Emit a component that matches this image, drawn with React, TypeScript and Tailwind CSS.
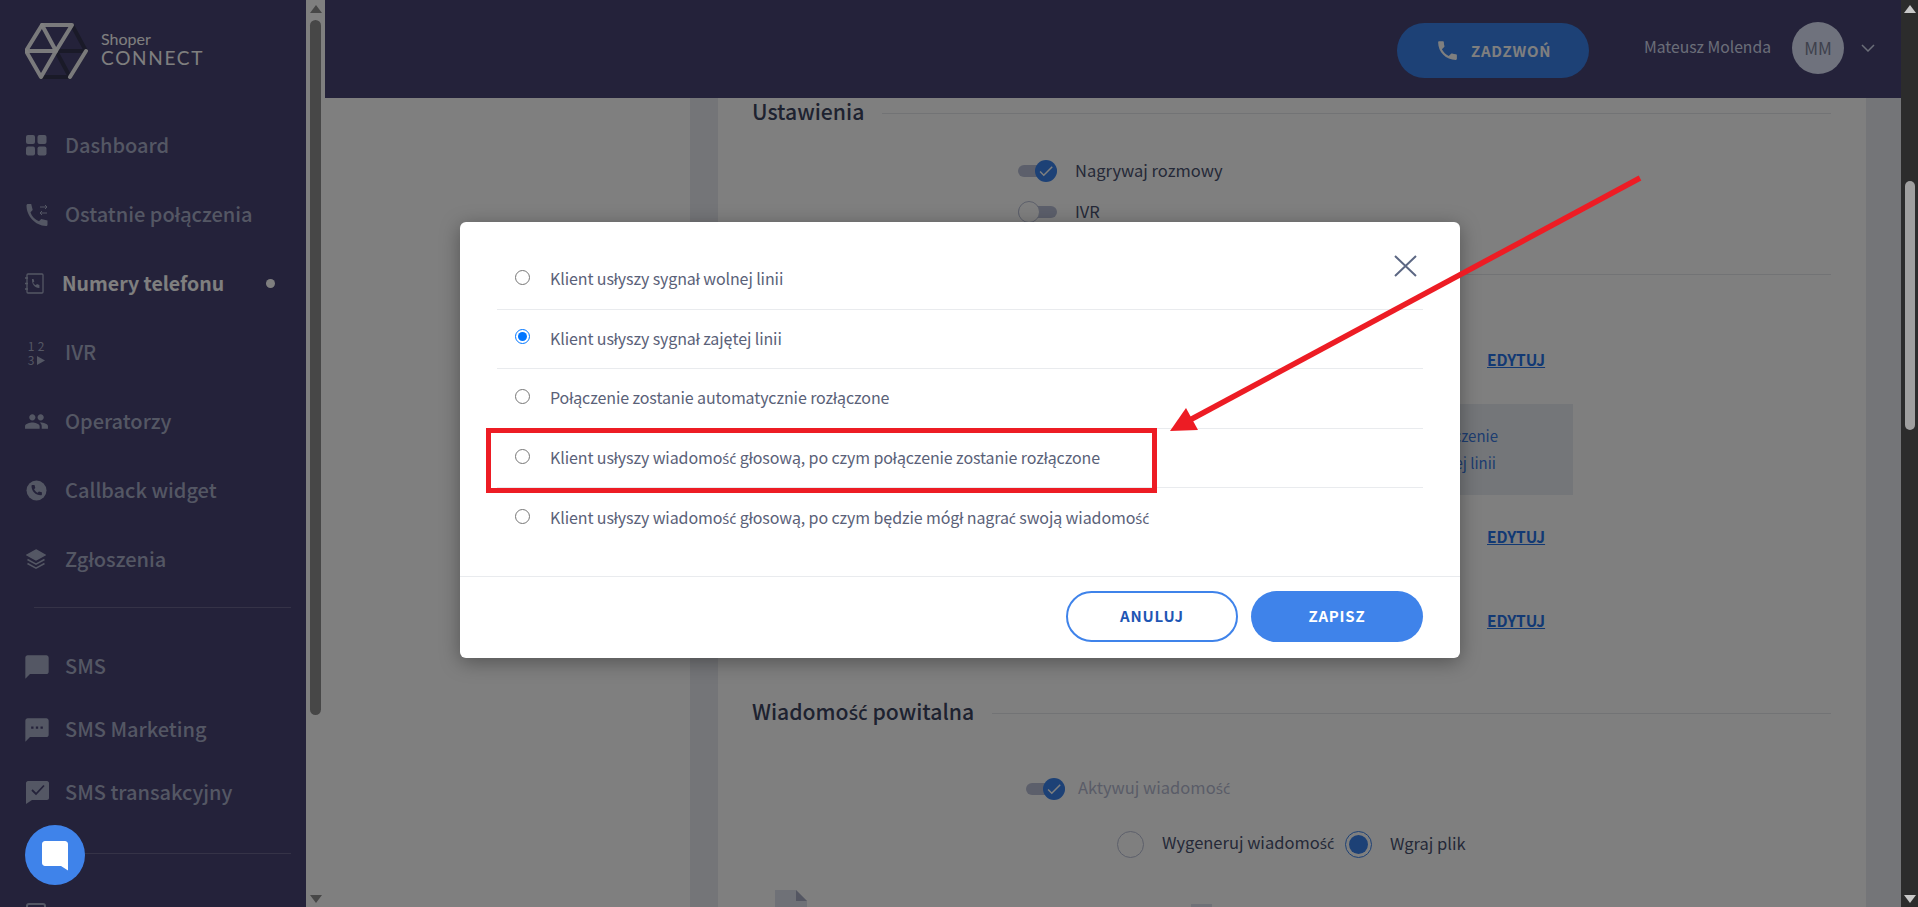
import { ReactNode } from 'react';
import { MdPeople, MdChatBubble, MdSms, MdPhone, MdCheck } from 'react-icons/md';

// the CJK family has no precomposed ś / ć, those two letters come from Noto Sans
function Pl({ text }: { text: string }) {
  return (
    <>
      {text.split(/([ść])/).map((part, i) =>
        part === 'ś' || part === 'ć' ? (
          <span key={i} className="font-['Noto_Sans',sans-serif] text-[0.92em]">{part}</span>
        ) : (
          part
        )
      )}
    </>
  );
}

function DashIcon() {
  return (
    <svg width="21" height="21" viewBox="0 0 21 21" fill="currentColor">
      <rect x="0" y="0" width="9" height="9" rx="2" />
      <rect x="11.5" y="0" width="9" height="9" rx="2" />
      <rect x="0" y="11.5" width="9" height="9" rx="2" />
      <rect x="11.5" y="11.5" width="9" height="9" rx="2" />
    </svg>
  );
}

function RecentIcon() {
  return (
    <svg width="23" height="24" viewBox="0 0 23 24" fill="none" stroke="currentColor">
      <path d="M2 1h3.200l1.500 6-2.200 2.200c1.200 4 4.600 7.500 8.500 9l2.200-2.200 6.300 1.500v4c0 1-.6 1.500-1.500 1.500C9 22.500 .5 13 .5 2.500c0-.9.600-1.500 1.500-1.500z" fill="currentColor" stroke="none" />
      <path d="M14 4h7M19 2l2 2-2 2M21 10h-7M16 8l-2 2 2 2" strokeWidth="1" />
    </svg>
  );
}

function BookIcon() {
  return (
    <svg width="20" height="21" viewBox="0 0 20 21" fill="none" stroke="currentColor" strokeWidth="1.300">
      <rect x="3" y="1" width="16" height="19" rx="1" />
      <path d="M1 5h3M1 10.500h3M1 16h3" />
      <path d="M8 6h1.500l.8 2.500-1.200 1c.6 1.400 1.500 2.300 2.800 2.800l1-1.200 2.500.8V15c-4.500.2-7.500-3.500-7.400-8.500z" fill="currentColor" stroke="none" />
    </svg>
  );
}

function IvrIcon() {
  return (
    <div className="grid grid-cols-2 w-[20px] text-[12px] leading-[14px] font-normal text-center">
      <span>1</span>
      <span>2</span>
      <span>3</span>
      <svg width="9" height="11" viewBox="0 0 9 11" fill="currentColor" className="mt-[2px] ml-[1px]"><path d="M0 1l8 4.500L0 10z" /></svg>
    </div>
  );
}

function CallbackIcon() {
  return (
    <svg width="21" height="21" viewBox="0 0 21 21">
      <circle cx="10.500" cy="10.500" r="10" fill="currentColor" />
      <path d="M6.500 5h2l.8 3-1.200 1.200c.6 1.500 2 2.900 3.600 3.500l1.200-1.200 3 .8v2c0 .6-.4 1-1 1C9.500 15.300 5.500 11 5.500 6c0-.6.4-1 1-1z" fill="#484474" />
    </svg>
  );
}

function LayersIcon() {
  return (
    <svg width="20" height="21" viewBox="0 0 20 21" fill="none" stroke="currentColor" strokeWidth="1.500">
      <path d="M10 1l9 5-9 5-9-5z" fill="currentColor" />
      <path d="M1.500 10.500l8.500 4.700 8.500-4.700M1.500 14.500l8.500 4.700 8.500-4.700" />
    </svg>
  );
}

function SmsDoneIcon() {
  return (
    <svg width="23" height="23" viewBox="0 0 23 23">
      <path d="M2 0h19c1 0 2 1 2 2v15c0 1-1 2-2 2H6l-6 4V2c0-1 1-2 2-2z" fill="currentColor" />
      <path d="M6 9l4 4 8-8.500" fill="none" stroke="#484474" strokeWidth="1.800" />
    </svg>
  );
}

function AppIcon() {
  return (
    <svg width="20" height="28" viewBox="0 0 20 28" fill="none" stroke="currentColor" strokeWidth="2">
      <rect x="1" y="1" width="18" height="26" rx="2" />
    </svg>
  );
}

function Logo() {
  return (
    <svg width="64" height="58" viewBox="0 0 64 58" fill="none" strokeWidth="4" strokeLinecap="round" strokeLinejoin="round">
      <g stroke="#343450">
        <path d="M47 3l14 26-16 26H16" />
        <path d="M31 29h30M31 29l14 26" />
      </g>
      <g stroke="#ffffff" strokeOpacity="0.95">
        <path d="M1 29L17 3h30L31 29z" />
        <path d="M17 3l14 26M1 29l15 26 15-26M45 55l16-26" />
      </g>
    </svg>
  );
}

type Item = { label: string; icon: ReactNode; active?: boolean };

const mainItems: Item[] = [
  { label: 'Dashboard', icon: <DashIcon /> },
  { label: 'Ostatnie połączenia', icon: <RecentIcon /> },
  { label: 'Numery telefonu', icon: <BookIcon />, active: true },
  { label: 'IVR', icon: <IvrIcon /> },
  { label: 'Operatorzy', icon: <MdPeople size={25} className="-ml-[2px]" /> },
  { label: 'Callback widget', icon: <CallbackIcon /> },
  { label: 'Zgłoszenia', icon: <LayersIcon /> },
];

const smsItems: Item[] = [
  { label: 'SMS', icon: <MdChatBubble size={28} className="-ml-[3px]" /> },
  { label: 'SMS Marketing', icon: <MdSms size={28} className="-ml-[3px]" /> },
  { label: 'SMS transakcyjny', icon: <SmsDoneIcon /> },
];

const options = [
  'Klient usłyszy sygnał wolnej linii',
  'Klient usłyszy sygnał zajętej linii',
  'Połączenie zostanie automatycznie rozłączone',
  'Klient usłyszy wiadomość głosową, po czym połączenie zostanie rozłączone',
  'Klient usłyszy wiadomość głosową, po czym będzie mógł nagrać swoją wiadomość',
];

function NavRow({ item, rowClass }: { item: Item; rowClass: string }) {
  if (item.active) {
    return (
      <div className={`${rowClass} flex items-center pl-[24px] text-white`}>
        <div className="w-[38px] shrink-0 text-[#a8aec8]">{item.icon}</div>
        <span className="text-[19.500px] font-bold leading-none -mt-[2px]">{item.label}</span>
        <span className="ml-[42px] w-[9px] h-[9px] rounded-full bg-white" />
      </div>
    );
  }
  return (
    <div className={`${rowClass} flex items-center pl-[26px] text-[#a8aec8]`}>
      <div className="w-[39px] shrink-0">{item.icon}</div>
      <span className="text-[20px] font-medium leading-none -mt-[2px]">{item.label}</span>
    </div>
  );
}

function Sidebar() {
  return (
    <aside className="w-[306px] h-full shrink-0 bg-[#484474] overflow-hidden">
      <div className="h-[111px] pt-[22px] pl-[25px] flex items-start">
        <Logo />
        <div className="ml-[12px] mt-[8px] text-white font-['Lato',sans-serif]">
          <div className="text-[16px] leading-[18px]">Shoper</div>
          <div className="text-[19px] leading-[20px] tracking-[1.700px]">CONNECT</div>
        </div>
      </div>
      {mainItems.map((item) => <NavRow key={item.label} item={item} rowClass="h-[69px]" />)}
      <div className="mt-[12.500px] ml-[34px] mr-[15px] h-px bg-[#6a678f]" />
      <div className="mt-[27.500px]">
        {smsItems.map((item) => <NavRow key={item.label} item={item} rowClass="h-[63px]" />)}
      </div>
      <div className="mt-[29px] ml-[34px] mr-[15px] h-px bg-[#6a678f]" />
      <div className="mt-[31px]">
        <NavRow item={{ label: 'Aplikacja mobilna', icon: <AppIcon /> }} rowClass="h-[63px]" />
      </div>
    </aside>
  );
}

function SideScroll() {
  return (
    <div className="w-[19px] h-full shrink-0 bg-white flex flex-col items-center">
      <div className="mt-[5px] w-0 h-0 border-x-[6px] border-x-transparent border-b-[8px] border-b-[#8e8e8e]" />
      <div className="mt-[7px] w-[11px] h-[695px] rounded-full bg-[#8e8e8e]" />
      <div className="mt-auto mb-[4px] w-0 h-0 border-x-[6px] border-x-transparent border-t-[8px] border-t-[#8e8e8e]" />
    </div>
  );
}

function Toggle({ on, className }: { on: boolean; className: string }) {
  return (
    <div className={`relative w-[39px] h-[12px] rounded-full bg-[#b9bfd6] shrink-0 ${className}`}>
      {on ? (
        <div className="absolute right-0 -top-[5px] w-[22px] h-[22px] rounded-full bg-[#3a82ec] flex items-center justify-center text-white">
          <MdCheck size={18} />
        </div>
      ) : (
        <div className="absolute left-0 -top-[5px] w-[22px] h-[22px] rounded-full bg-white border border-[#b9bfd6]" />
      )}
    </div>
  );
}

function SectionTitle({ text }: { text: string }) {
  return (
    <div className="h-[28px] flex items-center gap-[18px]">
      <h2 className="text-[21.200px] font-medium leading-none text-[#3c4560] whitespace-nowrap -mt-[2px]"><Pl text={text} /></h2>
      <div className="flex-1 h-px bg-[#e4e6ea] mt-[3px]" />
    </div>
  );
}

function EditLink({ className }: { className: string }) {
  return (
    <div className={`h-[28px] ml-[735px] flex items-center ${className}`}>
      <a className="text-[15.500px] font-bold underline text-[#2573e8] leading-none">EDYTUJ</a>
    </div>
  );
}

function Card() {
  return (
    <div className="flex-1 min-h-0 flex overflow-hidden bg-white">
      <div className="w-[365px] shrink-0" />
      <div className="flex-1 pl-[28px] pr-[35px] bg-[#e8ebf0] flex">
        <div className="flex-1 bg-white pl-[34px] pr-[35px]">
          <SectionTitle text="Ustawienia" />
          <div className="mt-[31px] h-[28px] flex items-center text-[16.500px] text-[#4a5270]">
            <Toggle on className="ml-[266px]" />
            <span className="ml-[18px] leading-none -mt-[2px]">Nagrywaj rozmowy</span>
          </div>
          <div className="mt-[13px] h-[28px] flex items-center text-[16.500px] text-[#4a5270]">
            <Toggle on={false} className="ml-[266px]" />
            <span className="ml-[18px] leading-none -mt-[2px]">IVR</span>
          </div>
          <div className="mt-[48px] h-px bg-[#e4e6ea]" />
          <EditLink className="mt-[71px]" />
          <div className="mt-[30px] ml-[148px] w-[673px] h-[91px] bg-[#e9edf3] text-[15px] text-[#3a7ae0] flex flex-col items-end pt-[18px] pr-[75px] leading-[27px]">
            <span>Klient usłyszy komunikat, a następnie połączenie</span>
            <span className="mr-[2px]">zostanie zakończone sygnałem zajętej linii</span>
          </div>
          <EditLink className="mt-[28px]" />
          <EditLink className="mt-[56px]" />
          <div className="mt-[63px]">
            <SectionTitle text="Wiadomość powitalna" />
          </div>
          <div className="mt-[49px] h-[28px] flex items-center text-[16.500px] text-[#b4b9d0]">
            <Toggle on className="ml-[274px]" />
            <span className="ml-[13px] leading-none -mt-[2px]"><Pl text="Aktywuj wiadomość" /></span>
          </div>
          <div className="mt-[28px] ml-[365px] h-[26px] flex items-center text-[16.500px] text-[#4a5270]">
            <div className="w-[27px] h-[27px] shrink-0 rounded-full border border-[#b9bfd6]" />
            <span className="ml-[18px] w-[173px] shrink-0 leading-none whitespace-nowrap -mt-[2px]"><Pl text="Wygeneruj wiadomość" /></span>
            <div className="ml-[10px] w-[27px] h-[27px] shrink-0 rounded-full border border-[#3a82ec] p-[3px]">
              <div className="w-full h-full rounded-full bg-[#3a82ec]" />
            </div>
            <span className="ml-[18px] leading-none whitespace-nowrap -mt-[2px]">Wgraj plik</span>
          </div>
          <div className="mt-[33px] ml-[23px] flex items-start">
            <svg width="32" height="40" viewBox="0 0 32 40">
              <path d="M0 0h21l11 11v29H0z" fill="#dfe2ee" />
              <path d="M21 0l11 11H21z" fill="#a8adc4" />
            </svg>
            <span className="ml-[93px] mt-[15px] w-[291px] text-[18px] font-bold text-[#4a5270] leading-none"><Pl text="wiadomosc_powitalna.wav" /></span>
            <div className="mt-[14px] w-[21px] h-[20px] bg-[#dfe2ee]" />
          </div>
        </div>
      </div>
    </div>
  );
}

function Header() {
  return (
    <header className="h-[98px] shrink-0 bg-[#484474] flex items-start justify-end pr-[26px]">
      <button className="mt-[23px] w-[192px] h-[55px] rounded-full bg-[#3a82ec] flex items-center text-white pl-[38px]">
        <MdPhone size={25} />
        <span className="ml-[11px] text-[15px] font-bold tracking-[0.800px] leading-none -mt-[1px]">ZADZWOŃ</span>
      </button>
      <span className="ml-[55px] mt-[37px] text-[15.700px] leading-[20px] text-[#d6dcf0] whitespace-nowrap">Mateusz Molenda</span>
      <div className="ml-[21px] mt-[22px] w-[52px] h-[52px] rounded-full bg-[#dee4fa] flex items-center justify-center text-[17px] text-[#7c8198]">MM</div>
      <svg width="14" height="8" viewBox="0 0 14 8" fill="none" stroke="#d6dcf0" strokeWidth="1.500" className="ml-[17px] mt-[44px]">
        <path d="M1 1l6 6 6-6" />
      </svg>
    </header>
  );
}

function PageScroll() {
  return (
    <div className="w-[17px] h-full shrink-0 bg-[#2c2c2c] flex flex-col items-center">
      <div className="mt-[5px] w-0 h-0 border-x-[6px] border-x-transparent border-b-[8px] border-b-[#c8c8c8]" />
      <div className="mt-[168px] w-[10px] h-[249px] rounded-full bg-[#9f9f9f]" />
      <div className="mt-auto mb-[4px] w-0 h-0 border-x-[6px] border-x-transparent border-t-[8px] border-t-[#c8c8c8]" />
    </div>
  );
}

function Modal() {
  return (
    <div className="absolute left-[460px] top-[222px] w-[1000px] h-[436px] bg-white rounded-[6px] shadow-[0_4px_20px_rgba(0,0,0,0.35)] flex flex-col">
      <button className="absolute left-[933px] top-[32px] text-[#5c6783]">
        <svg width="25" height="24" viewBox="0 0 25 24" fill="none" stroke="currentColor" strokeWidth="2"><path d="M2 2l21 20M23 2L2 22" /></svg>
      </button>
      <div className="flex-1 px-[37px] pt-[28px]">
        {options.map((text, i) => (
          <div key={text} className={`h-[59.600px] flex items-center pl-[18px] ${i < 4 ? 'border-b border-[#e9ebee]' : ''}`}>
            <input type="radio" readOnly checked={i === 1} className="w-[15px] h-[15px] -mt-[4px] shrink-0" />
            <span className="ml-[20px] text-[16px] tracking-[-0.100px] leading-none text-[#5a6178] -mt-[2px]"><Pl text={text} /></span>
          </div>
        ))}
      </div>
      <div className="h-[82px] shrink-0 border-t border-[#e9ebee] flex justify-end items-start gap-[13px] pt-[14px] pr-[37px]">
        <button className="w-[172px] h-[51px] rounded-full border-2 border-[#3f83ea] text-[#1f56b4] text-[15px] font-bold tracking-[0.800px]">ANULUJ</button>
        <button className="w-[172px] h-[51px] rounded-full bg-[#3f83ea] text-white text-[15px] font-bold tracking-[0.800px]">ZAPISZ</button>
      </div>
    </div>
  );
}

export default function App() {
  return (
    <div className="relative w-[1918px] h-[907px] overflow-hidden flex bg-white font-['Noto_Sans_CJK_SC','Noto_Sans',sans-serif]">
      <div className="relative w-[1901px] h-full flex shrink-0">
        <Sidebar />
        <SideScroll />
        <main className="flex-1 min-w-0 flex flex-col">
          <Header />
          <Card />
        </main>
        <div className="absolute inset-0 bg-black/50" />
        <Modal />
      </div>
      <PageScroll />

      {/* chat launcher */}
      <div className="absolute left-[25px] top-[825px] w-[60px] h-[60px] rounded-full bg-[#3f83ea] flex items-center justify-center">
        <svg width="26" height="30" viewBox="0 0 26 30" fill="#ffffff" className="mt-[1px]">
          <path d="M3 0h20c1.600 0 3 1.400 3 3v26.500l-7-4.500H3c-1.600 0-3-1.400-3-3V3c0-1.600 1.400-3 3-3z" />
        </svg>
      </div>

      {/* annotation drawn on top of the screenshot */}
      <svg className="absolute inset-0 pointer-events-none" width="1918" height="907" viewBox="0 0 1918 907" fill="none">
        <rect x="488.500" y="430.500" width="666" height="60" stroke="#ed1c24" strokeWidth="5" />
        <path d="M1640 178L1188 421" stroke="#ed1c24" strokeWidth="5.500" />
        <path d="M1170 431L1186 408L1198 430z" fill="#ed1c24" />
      </svg>
    </div>
  );
}
